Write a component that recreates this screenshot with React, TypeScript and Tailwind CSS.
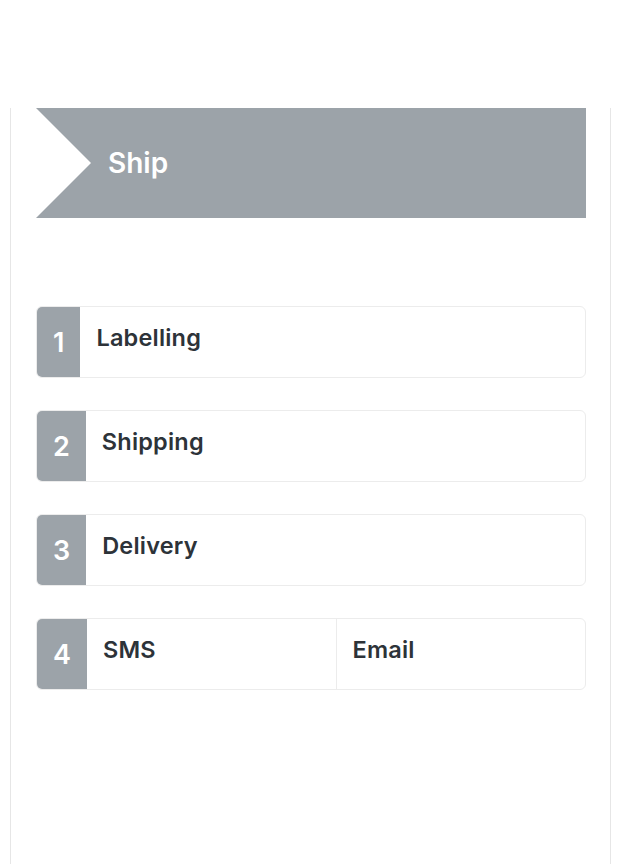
export default function App() {
    const steps = [
        { n: "1", cells: ["Labelling"] },
        { n: "2", cells: ["Shipping"] },
        { n: "3", cells: ["Delivery"] },
        { n: "4", cells: ["SMS", "Email"] },
    ];

    return (
        <div className="min-h-[864px] bg-white pt-[108px] font-['Inter',sans-serif]">
            <div className="ml-[10px] w-[601px] min-h-[756px] border-x border-[#e6e6e6] pl-[25px] pr-[24px]">
                {/* Banner */}
                <div className="h-[110px] bg-[#9ca3a9] flex items-center pl-[72px] [clip-path:polygon(0_0,100%_0,100%_100%,0_100%,55px_50%)]">
                    <span className="text-white text-[28px] font-semibold">Ship</span>
                </div>

                {/* Steps */}
                <div className="mt-[88px] flex flex-col gap-[32px]">
                    {steps.map((s) => (
                        <div
                            key={s.n}
                            className="h-[72px] flex rounded-md border border-[#ececec] overflow-hidden"
                        >
                            <div className="bg-[#9ca3a9] text-white text-[27px] font-semibold px-4 flex items-center pt-[2px]">
                                {s.n}
                            </div>
                            {s.cells.map((c, i) => (
                                <div
                                    key={c}
                                    className={
                                        "flex-1 flex items-center pl-4 pb-[8px] text-[23.5px] font-semibold tracking-[0.2px] text-[#2d3339]" +
                                        (i > 0 ? " border-l border-[#ececec]" : "")
                                    }
                                >
                                    {c}
                                </div>
                            ))}
                        </div>
                    ))}
                </div>
            </div>
        </div>
    );
}
